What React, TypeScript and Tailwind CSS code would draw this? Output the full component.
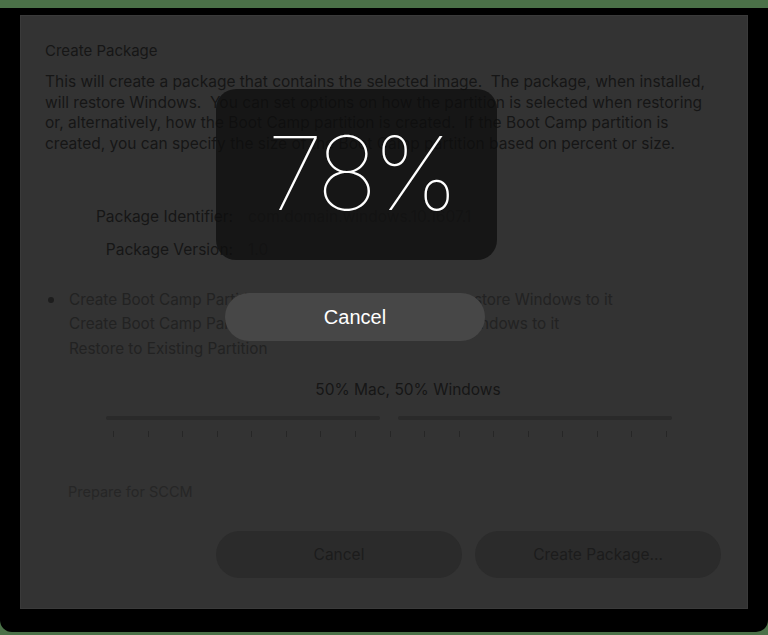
import React from 'react';

const ticks = Array.from({ length: 17 }, (_, i) => i);

export default function App() {
  return (
    <div className="w-[768px] h-[635px] bg-[#4b7148] pt-[8px] overflow-hidden" style={{ fontFamily: 'Inter, "Noto Sans", sans-serif' }}>
      <div className="w-[768px] h-[624px] bg-black rounded-b-[12px] pt-[7px] px-[20px]">
        <div className="relative w-[728px] h-[594px] bg-[#333333] border border-[#3a3a3a] pl-[24px] pt-[25px] text-[#161616]">
          <div className="text-[15px] leading-[20px]">Create Package</div>
          <div className="mt-[11px] text-[15.5px] leading-[20.7px] whitespace-pre">
            <div>This will create a package that contains the selected image.  The package, when installed,</div>
            <div>will restore Windows.  You can set options on how the partition is selected when restoring</div>
            <div>or, alternatively, how the Boot Camp partition is created.  If the Boot Camp partition is</div>
            <div>created, you can specify the size of the Boot Camp partition based on percent or size.</div>
          </div>

          <div className="mt-[52px] grid grid-cols-[188px_1fr] gap-x-[15px] gap-y-[13px] text-[15.5px] leading-[20px]">
            <div className="text-right">Package Identifier:</div>
            <div className="text-[#242424]">com.domain.windows.10.1607.1</div>
            <div className="text-right">Package Version:</div>
            <div className="text-[#242424]">1.0</div>
          </div>

          <div className="mt-[30px] flex flex-col gap-[4.5px] text-[15.3px] leading-[20px] text-[#222222]">
            <div className="flex items-center">
              <span className="w-[6px] h-[6px] rounded-full bg-[#1d1d1d] ml-[3px] mr-[15px]" />
              <span>Create Boot Camp Partition based on percentage and restore Windows to it</span>
            </div>
            <div className="pl-[24px]">Create Boot Camp Partition based on size and restore Windows to it</div>
            <div className="pl-[24px]">Restore to Existing Partition</div>
          </div>

          <div className="mt-[21px] ml-[23px] w-[680px] text-center text-[15.5px] leading-[20px] text-[#161616]">50% Mac, 50% Windows</div>

          <div className="mt-[16px] ml-[61px] w-[566px] flex items-center">
            <div className="w-[274px] h-[4px] rounded-full bg-[#2a2a2a]" />
            <div className="w-[18px]" />
            <div className="w-[274px] h-[4px] rounded-full bg-[#2a2a2a]" />
          </div>
          <div className="mt-[11px] ml-[68px] w-[554px] flex justify-between">
            {ticks.map((t) => (
              <div key={t} className="w-[1px] h-[6px] bg-[#262626]" />
            ))}
          </div>

          <div className="mt-[45px] ml-[23px] text-[14.5px] leading-[20px] text-[#262626]">Prepare for SCCM</div>

          <div className="mt-[29px] ml-[171px] flex gap-[13px]">
            <div className="w-[246px] h-[47px] rounded-full bg-[#2b2b2b] flex items-center justify-center text-[15.5px] text-[#1c1c1c]">Cancel</div>
            <div className="w-[246px] h-[47px] rounded-full bg-[#2b2b2b] flex items-center justify-center text-[15.5px] text-[#1c1c1c]">Create Package...</div>
          </div>

          {/* progress HUD */}
          <div className="absolute left-[195px] top-[73px] w-[281px] h-[171px] rounded-[20px] bg-[#0e0e0e]/75 flex items-center justify-center">
            <span className="text-white text-[102px] font-thin leading-none tracking-[-5px] -mt-[4px] ml-[8px]">78%</span>
          </div>
          <div className="absolute left-[204px] top-[277px] w-[260px] h-[48px] rounded-full bg-[#474747] flex items-center justify-center">
            <span className="text-white text-[20px] leading-none" style={{ fontFamily: '"Liberation Sans", Arial, sans-serif' }}>Cancel</span>
          </div>
        </div>
      </div>
    </div>
  );
}
